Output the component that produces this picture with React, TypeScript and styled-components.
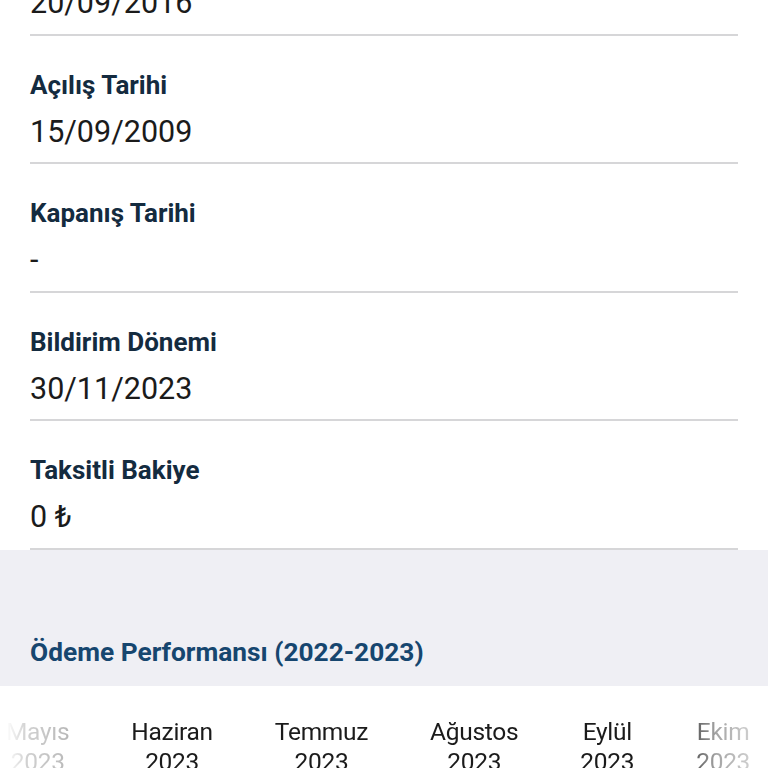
import React from "react";
import styled, { createGlobalStyle } from "styled-components";

const Global = createGlobalStyle`
  html, body { margin: 0; padding: 0; background: #ffffff; }
  body { font-family: Roboto, "Noto Sans", sans-serif; overflow: hidden; }
  * { box-sizing: border-box; }
`;

const Page = styled.div`
  width: 768px;
  height: 768px;
  overflow: hidden;
  background: #ffffff;
`;

const Scroller = styled.div`
  margin-top: -93px;
  display: flex;
  flex-direction: column;
`;

const InfoList = styled.div`
  display: flex;
  flex-direction: column;
  padding: 0 30px;
`;

const InfoRow = styled.div`
  display: flex;
  flex-direction: column;
  padding: 31px 0 12.5px;
  border-bottom: 2px solid #d6d6d8;
`;

const Label = styled.div`
  font-size: 26px;
  line-height: 36px;
  font-weight: 700;
  color: #142b3f;
`;

const Value = styled.div`
  margin-top: 10px;
  font-size: 30.5px;
  line-height: 37px;
  color: #1b1b1b;
`;

const Section = styled.div`
  background: #efeff4;
  padding: 85px 30px 17px;
`;

const SectionTitle = styled.div`
  font-size: 26.3px;
  line-height: 34px;
  font-weight: 700;
  color: #16466f;
`;

const MonthStrip = styled.div`
  display: flex;
  gap: 62px;
  padding-top: 31px;
  margin-left: 6px;
  white-space: nowrap;
  -webkit-mask-image: linear-gradient(to right, rgba(0,0,0,0) 0px, rgba(0,0,0,0.2) 20px, rgba(0,0,0,0.3) 60px, #000 120px, #000 670px, rgba(0,0,0,0.4) 710px, rgba(0,0,0,0.08) 768px);
  mask-image: linear-gradient(to right, rgba(0,0,0,0) 0px, rgba(0,0,0,0.2) 20px, rgba(0,0,0,0.3) 60px, #000 120px, #000 670px, rgba(0,0,0,0.4) 710px, rgba(0,0,0,0.08) 768px);
`;

const Month = styled.div`
  display: flex;
  flex-direction: column;
  align-items: center;
  flex: none;
  font-size: 24.5px;
  line-height: 30px;
  color: #1b1b1b;
  letter-spacing: -0.3px;
`;

const rows = [
  { label: "", value: "20/09/2016" },
  { label: "Açılış Tarihi", value: "15/09/2009" },
  { label: "Kapanış Tarihi", value: "-" },
  { label: "Bildirim Dönemi", value: "30/11/2023" },
  { label: "Taksitli Bakiye", value: "0 ₺" },
];

const months = ["Mayıs", "Haziran", "Temmuz", "Ağustos", "Eylül", "Ekim"];

export default function App() {
  return (
    <Page>
      <Global />
      <Scroller>
        <InfoList>
          {rows.map((r, i) => (
            <InfoRow key={i}>
              <Label>{r.label || "\u00a0"}</Label>
              <Value>{r.value}</Value>
            </InfoRow>
          ))}
        </InfoList>
        <Section>
          <SectionTitle>Ödeme Performansı (2022-2023)</SectionTitle>
        </Section>
        <MonthStrip>
          {months.map((m) => (
            <Month key={m}>
              <span>{m}</span>
              <span>2023</span>
            </Month>
          ))}
        </MonthStrip>
      </Scroller>
    </Page>
  );
}
